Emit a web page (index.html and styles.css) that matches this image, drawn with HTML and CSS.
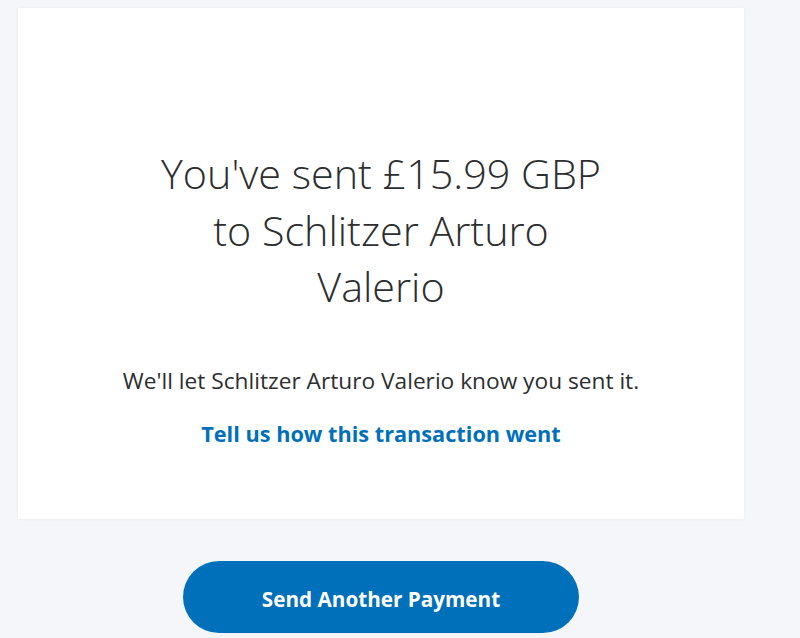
FILE: index.html
```html
<!DOCTYPE html>
<html lang="en">
<head>
<meta charset="utf-8">
<title>Payment sent</title>
<link rel="stylesheet" href="styles.css">
</head>
<body>
<main class="page">
  <section class="card">
    <h1 class="title">You've sent £15.99 GBP<br>to Schlitzer Arturo<br>Valerio</h1>
    <p class="note">We'll let Schlitzer Arturo Valerio know you sent it.</p>
    <a class="feedback" href="#">Tell us how this transaction went</a>
  </section>
  <div class="actions">
    <a class="btn" href="#">Send Another Payment</a>
  </div>
</main>
</body>
</html>
```

FILE: styles.css
```css
* { box-sizing: border-box; }
html, body {
  margin: 0;
  padding: 0;
  background: #f5f6fa;
  font-family: "Open Sans", "Noto Sans", sans-serif;
  color: #2c2e2f;
}
.page {
  width: 726px;
  margin-left: 18px;
  padding-top: 8px;
}
.card {
  background: #ffffff;
  height: 511px;
  box-shadow: 0 0 3px rgba(0,0,0,0.06);
  display: flex;
  flex-direction: column;
  align-items: center;
  padding-top: 137px;
}
.title {
  margin: 0;
  font-weight: 300;
  font-size: 41.3px;
  line-height: 56.5px;
  text-align: center;
  color: #2c2e2f;
}
.note {
  margin: 51px 0 0;
  font-size: 22.7px;
  line-height: 30px;
  color: #2c2e2f;
}
.feedback {
  margin-top: 23px;
  font-size: 21.7px;
  line-height: 30px;
  font-weight: 700;
  color: #0070ba;
  text-decoration: none;
}
.actions {
  display: flex;
  justify-content: center;
  padding-top: 42px;
}
.btn {
  width: 396px;
  height: 72px;
  padding-top: 3px;
  border-radius: 36px;
  background: #0070ba;
  color: #ffffff;
  font-size: 20.7px;
  font-weight: 700;
  text-decoration: none;
  display: flex;
  align-items: center;
  justify-content: center;
}
```
